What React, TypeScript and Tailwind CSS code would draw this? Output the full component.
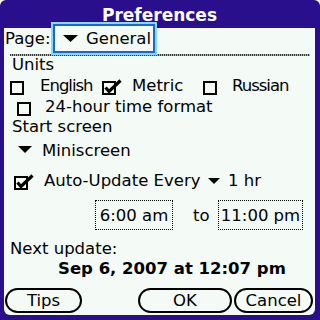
function Box() {
  return <div className="h-[14px] w-[14px] border-2 border-black" />
}

function CheckBox() {
  return (
    <svg width="20" height="16" viewBox="0 0 20 16" className="block">
      <rect x="1" y="3" width="12" height="12" fill="none" stroke="#000" strokeWidth="2" />
      <polyline points="3.5,8.5 7,12.5 18.5,1.5" fill="none" stroke="#000" strokeWidth="3.2" strokeLinejoin="miter" />
    </svg>
  )
}

function Tri({ w, h }: { w: number; h: number }) {
  return (
    <svg width={w} height={h} viewBox={`0 0 ${w} ${h}`} className="block">
      <polygon points={`0,0 ${w},0 ${w / 2},${h}`} fill="#000" />
    </svg>
  )
}

export default function App() {
  return (
    <div className="h-[320px] w-[320px] bg-[#f4faf6] font-['DejaVu_Sans',sans-serif] text-black">
      <div className="flex h-full flex-col rounded-t-[6px] bg-[#2a0f8c] pb-[5px] pl-[4px] pr-[5px]">
        {/* title bar */}
        <div className="h-[28px] shrink-0 pt-[5px] text-center text-[17px] font-bold leading-[20px] text-white">
          Preferences
        </div>

        <div className="flex flex-1 flex-col rounded-b-[6px] bg-[#f4faf6] text-[16.5px] leading-[20px] whitespace-nowrap">
          {/* Page popup */}
          <div className="flex h-[26px] shrink-0 items-start">
            <span className="ml-[1px] mt-[1px] w-[46px]">Page:</span>
            <div className="relative z-10 -mt-[6px] h-[33px] w-[106px] border-2 border-[#86dcf8]">
              <div className="flex h-full items-start border-2 border-[#1f63d6] bg-[#f4faf6] pl-[8px] pt-[3px]">
                <div className="mt-[6px]">
                  <Tri w={15} h={7} />
                </div>
                <span className="ml-[8px]">General</span>
              </div>
            </div>
          </div>
          <div className="ml-[6px] mr-[5px] h-[2px] shrink-0 bg-[repeating-linear-gradient(90deg,#3a3a3a_0_1px,#b0b0b0_1px_2px)]" />

          <div className="h-[18px] shrink-0 pl-[8px] leading-[18px]">Units</div>

          <div className="mt-[2px] flex h-[20px] shrink-0 items-start">
            <div className="ml-[6px] mt-[5px]">
              <Box />
            </div>
            <span className="ml-[16px] w-[52px] tracking-[-1px]">English</span>
            <div className="ml-[10px] mt-[3px]">
              <CheckBox />
            </div>
            <span className="ml-[10px] w-[51px]">Metric</span>
            <div className="ml-[20px] mt-[5px]">
              <Box />
            </div>
            <span className="ml-[15px] tracking-[-1px]">Russian</span>
          </div>

          <div className="mt-[1px] flex h-[20px] shrink-0 items-start">
            <div className="ml-[13px] mt-[5px]">
              <Box />
            </div>
            <span className="ml-[14px]">24-hour time format</span>
          </div>

          <div className="h-[20px] shrink-0 pl-[8px]">Start screen</div>

          <div className="mt-[4px] flex h-[20px] shrink-0 items-start">
            <div className="ml-[14px] mt-[5px]">
              <Tri w={14} h={7} />
            </div>
            <span className="ml-[10px]">Miniscreen</span>
          </div>

          <div className="mt-[10px] flex h-[20px] shrink-0 items-start">
            <div className="ml-[10px] mt-[3px]">
              <CheckBox />
            </div>
            <span className="ml-[10px] w-[156px]">Auto-Update Every</span>
            <div className="ml-[8px] mt-[7px]">
              <Tri w={12} h={6} />
            </div>
            <span className="ml-[8px]">1 hr</span>
          </div>

          {/* time range */}
          <div className="mt-[9px] flex h-[30px] shrink-0 items-start">
            <div className="ml-[91px] h-[30px] w-[78px] border border-dotted border-black pt-[5px] text-center">
              6:00 am
            </div>
            <span className="ml-[20px] mt-[6px] w-[17px]">to</span>
            <div className="ml-[8px] h-[30px] w-[85px] border border-dotted border-black pt-[5px] text-center">
              11:00 pm
            </div>
          </div>

          <div className="mt-[9px] h-[20px] shrink-0 pl-[6px]">Next update:</div>
          <div className="h-[20px] shrink-0 pl-[54px] font-bold">Sep 6, 2007 at 12:07 pm</div>

          {/* buttons */}
          <div className="mt-[9px] flex h-[25px] shrink-0">
            <button className="ml-[1px] h-[25px] w-[77px] rounded-full border-2 border-black leading-[19px]">
              Tips
            </button>
            <button className="ml-[56px] h-[25px] w-[94px] rounded-full border-2 border-black leading-[19px]">
              OK
            </button>
            <button className="ml-[2px] h-[25px] w-[79px] rounded-full border-2 border-black leading-[19px]">
              Cancel
            </button>
          </div>
        </div>
      </div>
    </div>
  )
}
